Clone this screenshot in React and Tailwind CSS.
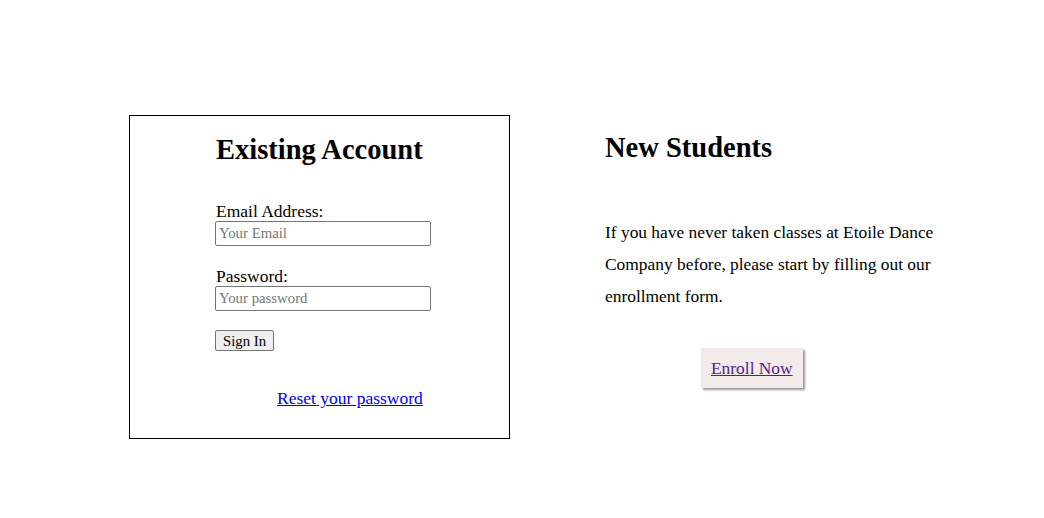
export default function App() {
  const ff = { fontFamily: '"Liberation Serif", serif' };
  return (
    <div className="w-[1044px] h-[518px] bg-white text-black overflow-hidden" style={ff}>
      <div className="flex pt-[115px] pl-[129px]">
        <div className="w-[381px] h-[324px] border border-black pl-[86px] pt-[19px]">
          <h2 className="text-[28.5px] font-bold leading-[30px]">Existing Account</h2>
          <div className="mt-[37px] text-[17.5px] leading-[18px]">Email Address:</div>
          <input className="block mt-px w-[216px] h-[25px] -ml-px border border-[#767676] rounded-[2px] px-[3px] text-[14.8px] placeholder:text-[#757575]" placeholder="Your Email" style={ff} />
          <div className="mt-[21px] text-[17.5px] leading-[18px]">Password:</div>
          <input className="block mt-px w-[216px] h-[25px] -ml-px border border-[#767676] rounded-[2px] px-[3px] text-[14.8px] placeholder:text-[#757575]" placeholder="Your password" style={ff} />
          <button className="mt-[19px] -ml-px block h-[21px] px-[7px] border border-[#767676] rounded-[2px] bg-[#efefef] text-[14.8px] leading-[18px]" style={ff}>Sign In</button>
          <a href="#" className="block mt-[37px] ml-[61px] w-fit text-[17.5px] leading-[20px] text-[#0000ee] underline">Reset your password</a>
        </div>
        <div className="ml-[95px] w-[360px] pt-[18px]">
          <h2 className="text-[28.5px] font-bold leading-[30px]">New Students</h2>
          <p className="mt-[53px] text-[17.4px] leading-[32px]">If you have never taken classes at Etoile Dance Company before, please start by filling out our enrollment form.</p>
          <div className="mt-[36px] pl-[96px]">
            <a href="#" className="inline-block bg-[#f3eaea] px-[10px] py-[10px] text-[17.4px] leading-[20px] text-[#551a8b] underline shadow-[2px_2px_2px_#999]">Enroll Now</a>
          </div>
        </div>
      </div>
    </div>
  );
}
